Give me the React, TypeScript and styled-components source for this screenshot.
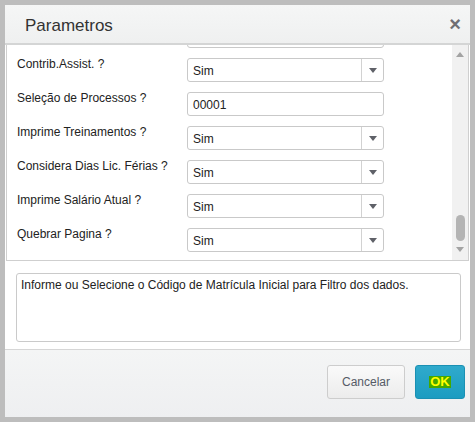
import React from "react";
import styled, { createGlobalStyle } from "styled-components";

const GlobalStyle = createGlobalStyle`
  html, body { margin: 0; padding: 0; background: #bdbdbd; }
  body { font-family: "Liberation Sans", Arial, sans-serif; }
  * { box-sizing: border-box; }
`;

const Page = styled.div`
  width: 475px;
  height: 422px;
  padding: 5px;
  background: #bdbdbd;
`;

const Dialog = styled.div`
  width: 465px;
  background: #fff;
  display: flex;
  flex-direction: column;
`;

const Header = styled.div`
  height: 40px;
  border-bottom: 2px solid #d4d5d5;
  background: linear-gradient(#f5f6f6, #eff0f0);
  display: flex;
  align-items: center;
  justify-content: space-between;
  padding: 4px 9px 0 20px;
`;

const Title = styled.div`
  font-size: 17px;
  color: #333;
`;

const Close = styled.div`
  font-size: 20px;
  font-weight: bold;
  color: #6f6f74;
  line-height: 20px;
  margin-top: -4px;
`;

const Body = styled.div`
  margin: 0 1px;
  height: 216px;
  border: 1px solid #cfcfcf;
  border-top: none;
  display: flex;
`;

const Content = styled.div`
  flex: 1;
  overflow: hidden;
  display: flex;
  flex-direction: column;
  justify-content: flex-end;
  gap: 10px;
  padding: 0 0 8px 10px;
`;

const Row = styled.div`
  display: flex;
  align-items: flex-start;
  height: 24px;
  flex: none;
`;

const Label = styled.div`
  width: 170px;
  flex: none;
  font-size: 12px;
  line-height: 14px;
  color: #222;
  margin-top: -1px;
`;

const Field = styled.div`
  width: 197px;
  height: 24px;
  border: 1px solid #c9c9c9;
  border-radius: 3px;
  display: flex;
  align-items: center;
  background: #fff;
`;

const FieldText = styled.div`
  flex: 1;
  font-size: 12px;
  color: #222;
  padding-left: 5px;
  padding-top: 1px;
`;

const ArrowBox = styled.div`
  width: 22px;
  height: 100%;
  border-left: 1px solid #d2d2d2;
  display: flex;
  align-items: center;
  justify-content: center;
`;

const Tri = styled.div<{ $dir: "up" | "down"; $color: string; $w: number }>`
  width: 0;
  height: 0;
  border-left: ${(p) => p.$w / 2}px solid transparent;
  border-right: ${(p) => p.$w / 2}px solid transparent;
  ${(p) =>
    p.$dir === "down"
      ? `border-top: ${Math.round(p.$w * 0.6)}px solid ${p.$color};`
      : `border-bottom: ${Math.round(p.$w * 0.6)}px solid ${p.$color};`}
`;

const Scrollbar = styled.div`
  width: 16px;
  flex: none;
  background: #f1f1f1;
  display: flex;
  flex-direction: column;
  align-items: center;
  padding: 7px 0 8px;
`;

const Track = styled.div`
  flex: 1;
  display: flex;
  flex-direction: column;
  justify-content: flex-end;
  align-items: center;
  padding-bottom: 6px;
`;

const Thumb = styled.div`
  width: 9px;
  height: 26px;
  border-radius: 5px;
  background: #b4b4b4;
`;

const DescWrap = styled.div`
  padding: 12px 9px 7px 11px;
  background: #fff;
`;

const DescBox = styled.div`
  height: 69px;
  border: 1px solid #cacaca;
  border-radius: 3px;
  padding: 4px 4px;
  font-size: 12px;
  line-height: 14px;
  color: #222;
`;

const Footer = styled.div`
  height: 68px;
  border-top: 1px solid #d6d6d6;
  background: linear-gradient(#f4f5f5, #eeeff1);
  display: flex;
  justify-content: flex-end;
  align-items: flex-start;
  gap: 10px;
  padding: 15px 5px 0 0;
`;

const Button = styled.button<{ $primary?: boolean }>`
  height: 34px;
  width: ${(p) => (p.$primary ? 50 : 78)}px;
  border-radius: 3px;
  font-family: "Liberation Sans", Arial, sans-serif;
  font-size: 12px;
  display: flex;
  align-items: center;
  justify-content: center;
  padding: 0;
  cursor: pointer;
  ${(p) =>
    p.$primary
      ? `background: linear-gradient(#2faacc, #1c9cc1); border: 1px solid #1a90b3; color: #fff;`
      : `background: linear-gradient(#fafafa, #ececec); border: 1px solid #cdcdcd; color: #555b66;`}
`;

const Highlight = styled.span`
  background: #45a800;
  color: #ffff00;
  font-weight: bold;
  font-size: 13px;
  line-height: 12px;
  padding: 0 1px;
`;

type Item = { id: string; label: string; value: string; select: boolean };

const items: Item[] = [
  { id: "prev", label: "", value: "", select: false },
  { id: "contrib", label: "Contrib.Assist. ?", value: "Sim", select: true },
  { id: "proc", label: "Seleção de Processos ?", value: "00001", select: false },
  { id: "trein", label: "Imprime Treinamentos ?", value: "Sim", select: true },
  { id: "ferias", label: "Considera Dias Lic. Férias ?", value: "Sim", select: true },
  { id: "sal", label: "Imprime Salário Atual ?", value: "Sim", select: true },
  { id: "pag", label: "Quebrar Pagina ?", value: "Sim", select: true },
];

export default function App() {
  return (
    <Page>
      <GlobalStyle />
      <Dialog>
        <Header>
          <Title>Parametros</Title>
          <Close>×</Close>
        </Header>
        <Body>
          <Content>
            {items.map((it) => (
              <Row key={it.id}>
                <Label>{it.label}</Label>
                <Field>
                  <FieldText>{it.value}</FieldText>
                  {it.select && (
                    <ArrowBox>
                      <Tri $dir="down" $color="#5f6168" $w={9} />
                    </ArrowBox>
                  )}
                </Field>
              </Row>
            ))}
          </Content>
          <Scrollbar>
            <Tri $dir="up" $color="#a3a3a3" $w={8} />
            <Track>
              <Thumb />
            </Track>
            <Tri $dir="down" $color="#a3a3a3" $w={8} />
          </Scrollbar>
        </Body>
        <DescWrap>
          <DescBox>
            Informe ou Selecione o Código de Matrícula Inicial para Filtro dos dados.
          </DescBox>
        </DescWrap>
        <Footer>
          <Button>Cancelar</Button>
          <Button $primary>
            <Highlight>OK</Highlight>
          </Button>
        </Footer>
      </Dialog>
    </Page>
  );
}
